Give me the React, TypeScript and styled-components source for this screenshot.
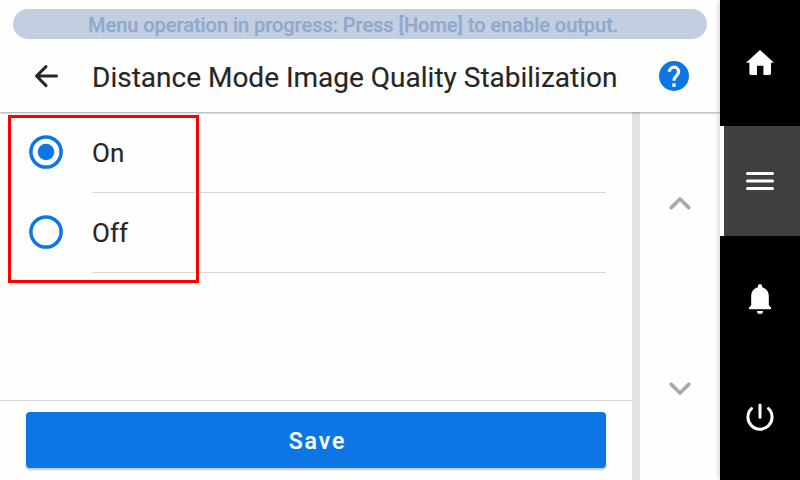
import React, { useState } from "react";
import styled, { createGlobalStyle } from "styled-components";

const GlobalStyle = createGlobalStyle`
  *, *::before, *::after { box-sizing: border-box; }
  body { margin: 0; background: #fff; font-family: Roboto, sans-serif; color: #262626; }
  button { font: inherit; color: inherit; border: 0; padding: 0; background: none; }
  svg { display: block; }
`;

const Screen = styled.div`
  display: flex;
  width: 800px;
  height: 480px;
  overflow: hidden;
  background: #fefefe;
`;

const Main = styled.main`
  flex: 1;
  min-width: 0;
  display: flex;
  flex-direction: column;
`;

const Header = styled.header`
  flex: none;
  height: 112px;
  padding-top: 9px;
  position: relative;
  z-index: 1;
  background: #fefefe;
  box-shadow: 0 1px 2px rgba(0, 0, 0, 0.36);
`;

const Banner = styled.div`
  height: 30px;
  margin: 0 13px;
  border-radius: 15px;
  background: #c3cfe1;
  color: #91a9cc;
  font-size: 20px;
  font-weight: 500;
  line-height: 32px;
  letter-spacing: -0.035px;
  -webkit-text-stroke: 0.25px #91a9cc;
  padding-left: 75px;
  white-space: nowrap;
`;

const TitleBar = styled.div`
  display: flex;
  align-items: center;
  height: 74px;
  padding: 0 31px;
`;

const BackButton = styled.button`
  width: 30px;
  height: 30px;
`;

const Title = styled.h1`
  flex: 1;
  margin: 4px 0 0 31px;
  font-size: 28px;
  font-weight: 400;
  line-height: 36px;
  -webkit-text-stroke: 0.15px #262626;
  white-space: nowrap;
`;

const HelpButton = styled.button`
  width: 30px;
  height: 30px;
`;

const Body = styled.div`
  flex: 1;
  display: flex;
  min-height: 0;
`;

const Content = styled.section`
  width: 632px;
  display: flex;
  flex-direction: column;
`;

const OptionList = styled.div`
  flex: 1;
  position: relative;
`;

const Option = styled.label`
  display: flex;
  align-items: center;
  height: 80px;
  padding-left: 29px;
`;

const RadioInput = styled.input`
  position: absolute;
  opacity: 0;
  pointer-events: none;
`;

const OptionLabel = styled.span`
  flex: 1;
  height: 81px;
  margin: 1px 26px 0 29px;
  border-bottom: 1px solid #d8d8d8;
  font-size: 26px;
  line-height: 82px;
  -webkit-text-stroke: 0.15px #262626;
`;

const Highlight = styled.div`
  position: absolute;
  left: 8px;
  top: 3px;
  width: 191px;
  height: 168px;
  border: 3px solid #ff0000;
  box-shadow: 0 0 0 1px #fff, inset 0 0 0 1px #fff;
  pointer-events: none;
`;

const Footer = styled.footer`
  height: 80px;
  padding: 11px 26px 12px;
  border-top: 1px solid #d8d8d8;
`;

const SaveButton = styled.button`
  display: block;
  width: 580px;
  height: 56px;
  padding: 4px 0 0 3px;
  border-radius: 4px;
  background: #0c76e5;
  color: #fff;
  font-size: 23px;
  font-weight: 500;
  line-height: 52px;
  letter-spacing: 2px;
  -webkit-text-stroke: 0.2px #fff;
  box-shadow: 0 2px 2px rgba(0, 0, 0, 0.22);
`;

const Pager = styled.aside`
  width: 88px;
  border-left: 8px solid #e1e3e5;
  display: flex;
  flex-direction: column;
  align-items: center;
  padding-top: 81px;
  gap: 165px;
`;

const PagerButton = styled.button`
  width: 26px;
  height: 20px;
`;

const SideNav = styled.nav`
  width: 80px;
  display: flex;
  flex-direction: column;
  gap: 8px;
  padding: 8px 0;
  background: #000;
  position: relative;
  z-index: 2;
  box-shadow: 0 0 6px rgba(0, 0, 0, 0.25);
`;

const NavItem = styled.button<{ $active?: boolean }>`
  display: grid;
  place-items: center;
  height: 110px;
  background: ${(p) => (p.$active ? "linear-gradient(90deg, #fff 4px, #404040 4px)" : "#000")};
`;

const HomeIcon = () => (
  <svg width="40" height="40" viewBox="0 0 40 40" fill="#fff">
    <path d="M20 7 L34 19.8 H31 V30.6 Q31 32 29.6 32 H23.4 V22.8 H17 V32 H10.8 Q9.4 32 9.4 30.6 V19.8 H6 Z" />
  </svg>
);

const MenuIcon = () => (
  <svg width="40" height="40" viewBox="0 0 40 40" fill="none" stroke="#fff" strokeWidth="3" strokeLinecap="round">
    <path d="M7.5 12.5H32.5M7.5 20H32.5M7.5 27.5H32.5" />
  </svg>
);

const BellIcon = () => (
  <svg width="40" height="40" viewBox="0 0 40 40" fill="#fff">
    <path d="M20 5.2 A2 2 0 0 1 22.1 7.3 V8.2 C26 9.3 28.8 12.5 28.8 16.8 V26.3 L31 28.5 Q31.9 30.2 30 30.3 H10 Q8.1 30.2 9 28.5 L11.2 26.3 V16.8 C11.2 12.5 14 9.3 17.9 8.2 V7.3 A2 2 0 0 1 20 5.2Z" />
    <path d="M17 32 H23 A3 3 0 0 1 17 32Z" />
  </svg>
);

const PowerIcon = () => (
  <svg width="40" height="40" viewBox="0 0 40 40" fill="none" stroke="#fff" strokeWidth="3" strokeLinecap="round">
    <path d="M11.5 11.5 A12.1 12.1 0 1 0 28.5 11.5M20 8 V20.2" />
  </svg>
);

const BackIcon = () => (
  <svg width="30" height="30" viewBox="0 0 30 30" fill="none" stroke="#262626" strokeWidth="3" strokeLinecap="round" strokeLinejoin="round">
    <path d="M25.5 15H5.5M15 5.6L5.5 15L15 24.6" />
  </svg>
);

const HelpIcon = () => (
  <svg width="30" height="30" viewBox="0 0 30 30">
    <circle cx="15" cy="15" r="15" fill="#0c76e5" />
    <path d="M10.4 10.8 A4.6 4.6 0 0 1 19.6 10.8 C19.6 14.5 15 14.8 15 19.8" fill="none" stroke="#fff" strokeWidth="3.2" />
    <rect x="13.3" y="22.4" width="3.4" height="3.4" fill="#fff" />
  </svg>
);

const RadioIcon = ({ checked }: { checked: boolean }) => (
  <svg width="34" height="34" viewBox="0 0 34 34">
    <circle cx="17" cy="17" r="15.1" fill="none" stroke="#0c76e5" strokeWidth="3.5" />
    {checked && <circle cx="17" cy="17" r="8.3" fill="#0c76e5" />}
  </svg>
);

const Chevron = ({ down }: { down?: boolean }) => (
  <svg width="26" height="20" viewBox="0 0 26 20" fill="none" stroke="#aaa" strokeWidth="3.8" strokeLinecap="round" strokeLinejoin="round">
    <path d={down ? "M4.2 6.3L13 15L21.8 6.3" : "M4.2 14.7L13 6L21.8 14.7"} />
  </svg>
);

const options = ["On", "Off"];

export default function App() {
  const [value, setValue] = useState("On");
  return (
    <>
      <GlobalStyle />
      <Screen>
        <Main>
          <Header>
            <Banner>Menu operation in progress: Press [Home] to enable output.</Banner>
            <TitleBar>
              <BackButton aria-label="Back"><BackIcon /></BackButton>
              <Title>Distance Mode Image Quality Stabilization</Title>
              <HelpButton aria-label="Help"><HelpIcon /></HelpButton>
            </TitleBar>
          </Header>
          <Body>
            <Content>
              <OptionList role="radiogroup">
                {options.map((o) => (
                  <Option key={o}>
                    <RadioInput type="radio" name="mode" checked={value === o} onChange={() => setValue(o)} />
                    <RadioIcon checked={value === o} />
                    <OptionLabel>{o}</OptionLabel>
                  </Option>
                ))}
                <Highlight />
              </OptionList>
              <Footer><SaveButton>Save</SaveButton></Footer>
            </Content>
            <Pager>
              <PagerButton aria-label="Scroll up"><Chevron /></PagerButton>
              <PagerButton aria-label="Scroll down"><Chevron down /></PagerButton>
            </Pager>
          </Body>
        </Main>
        <SideNav>
          <NavItem aria-label="Home"><HomeIcon /></NavItem>
          <NavItem aria-label="Menu" $active><MenuIcon /></NavItem>
          <NavItem aria-label="Notifications"><BellIcon /></NavItem>
          <NavItem aria-label="Power"><PowerIcon /></NavItem>
        </SideNav>
      </Screen>
    </>
  );
}
